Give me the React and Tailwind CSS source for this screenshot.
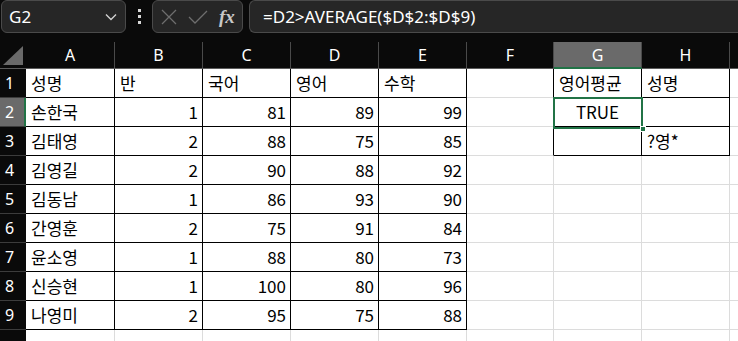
import React from 'react';

// sheet data, row by row (A..H)
const rows = [
  ['성명', '반', '국어', '영어', '수학', '', '영어평균', '성명'],
  ['손한국', 1, 81, 89, 99, '', 'TRUE', ''],
  ['김태영', 2, 88, 75, 85, '', '', '?영*'],
  ['김영길', 2, 90, 88, 92, '', '', ''],
  ['김동남', 1, 86, 93, 90, '', '', ''],
  ['간영훈', 2, 75, 91, 84, '', '', ''],
  ['윤소영', 1, 88, 80, 73, '', '', ''],
  ['신승현', 1, 100, 80, 96, '', '', ''],
  ['나영미', 2, 95, 75, 88, '', '', ''],
  ['', '', '', '', '', '', '', ''],
];

const cols = ['A', 'B', 'C', 'D', 'E', 'F', 'G', 'H', ''];

// cells that carry thin black borders
function inBox(r, c) {
  if (r >= 0 && r <= 8 && c >= 0 && c <= 4) return true;
  if (r >= 0 && r <= 2 && c >= 6 && c <= 7) return true;
  return false;
}

const Cell = ({ r, c, value }) => {
  const right = inBox(r, c) || inBox(r, c + 1) ? 'border-r-black' : 'border-r-[#dcdcdc]';
  const bottom = inBox(r, c) || inBox(r + 1, c) ? 'border-b-black' : 'border-b-[#dcdcdc]';
  const isNum = typeof value === 'number';
  const isBool = value === 'TRUE';
  let align = 'justify-start pl-[5px]';
  if (isNum) align = 'justify-end pr-[4px]';
  if (isBool) align = 'justify-center';
  return (
    <div className={`flex items-center border-r border-b bg-white text-[17px] text-black ${right} ${bottom} ${align}`}>
      {value}
    </div>
  );
};

export default function App() {
  return (
    <div className="relative w-[738px] h-[341px] overflow-hidden bg-[#0a0a0a] font-['Noto_Sans_CJK_KR',sans-serif]">
      {/* formula bar */}
      <div className="flex h-[42px] items-start">
        <div className="ml-[1px] flex h-[33px] w-[125px] items-center justify-between rounded-[6px] border border-[#4a4a4a] bg-[#262626] pl-[7px] pr-[8px]">
          <span className="font-['Noto_Sans',sans-serif] text-[17px] text-white">G2</span>
          <svg width="12" height="8" viewBox="0 0 12 8">
            <path d="M1 1.5 L6 6.5 L11 1.5" stroke="#d0d0d0" strokeWidth="1.4" fill="none" />
          </svg>
        </div>
        <div className="flex h-[33px] w-[26px] flex-col items-center justify-center gap-[3px]">
          <span className="h-[3px] w-[3px] bg-[#d8d8d8]" />
          <span className="h-[3px] w-[3px] bg-[#d8d8d8]" />
          <span className="h-[3px] w-[3px] bg-[#d8d8d8]" />
        </div>
        <div className="flex h-[33px] w-[91px] items-center rounded-[6px] border border-[#4a4a4a] bg-[#262626] pl-[7px]">
          <svg width="18" height="18" viewBox="0 0 18 18">
            <path d="M2 2 L16 16 M16 2 L2 16" stroke="#6e6e6e" strokeWidth="1.3" fill="none" />
          </svg>
          <svg width="22" height="18" viewBox="0 0 22 18" className="ml-[9px]">
            <path d="M2 9 L8 15 L20 3" stroke="#6e6e6e" strokeWidth="1.3" fill="none" />
          </svg>
          <span className="ml-[10px] font-['Liberation_Serif',serif] text-[19px] italic font-bold text-[#c8c8c8] leading-none">fx</span>
        </div>
        <div className="ml-[6px] flex h-[33px] flex-1 items-center rounded-l-[6px] border border-r-0 border-[#4a4a4a] bg-[#262626] pl-[13px]">
          <span className="font-['Noto_Sans',sans-serif] text-[17px] text-white">=D2&gt;AVERAGE($D$2:$D$9)</span>
        </div>
      </div>

      {/* sheet */}
      <div className="grid grid-cols-[26px_89px_88px_88px_88px_88px_87px_88px_88px_20px] grid-rows-[27px_repeat(10,29px)]">
        {/* corner */}
        <div className="flex items-end justify-end border-b border-[#5c5c5c] pb-[3px] pr-[3px]">
          <svg width="20" height="19" viewBox="0 0 20 19">
            <polygon points="20,0 20,19 0,19" fill="#6a6a6a" />
          </svg>
        </div>
        {cols.map((name, i) => (
          <div
            key={'h' + i}
            className={`flex items-center justify-center border-r font-['Noto_Sans',sans-serif] text-[16px] text-white ${
              name === 'G'
                ? 'border-r-[#4a4a4a] border-b-2 border-b-[#217346] bg-[#6a6a6a]'
                : 'border-r-[#4a4a4a] border-b border-b-[#5c5c5c]'
            }`}
          >
            {name}
          </div>
        ))}

        {rows.map((row, r) => (
          <React.Fragment key={r}>
            <div
              className={`flex items-center pl-[5px] font-['Noto_Sans',sans-serif] text-[16px] text-white border-b border-b-[#3c3c3c] ${
                r === 1 ? 'bg-[#6a6a6a] border-r-2 border-r-[#217346]' : ''
              }`}
            >
              {r < 9 ? r + 1 : null}
            </div>
            {row.map((v, c) => (
              <Cell key={c} r={r} c={c} value={v} />
            ))}
            <div className="border-b border-b-[#dcdcdc] bg-white" />
          </React.Fragment>
        ))}
      </div>

      {/* active cell G2 */}
      <div className="absolute left-[553px] top-[97px] h-[32px] w-[90px] border-2 border-[#217346]" />
      <div className="absolute left-[640px] top-[126px] h-[6px] w-[6px] border border-white bg-[#217346]" />
    </div>
  );
}
